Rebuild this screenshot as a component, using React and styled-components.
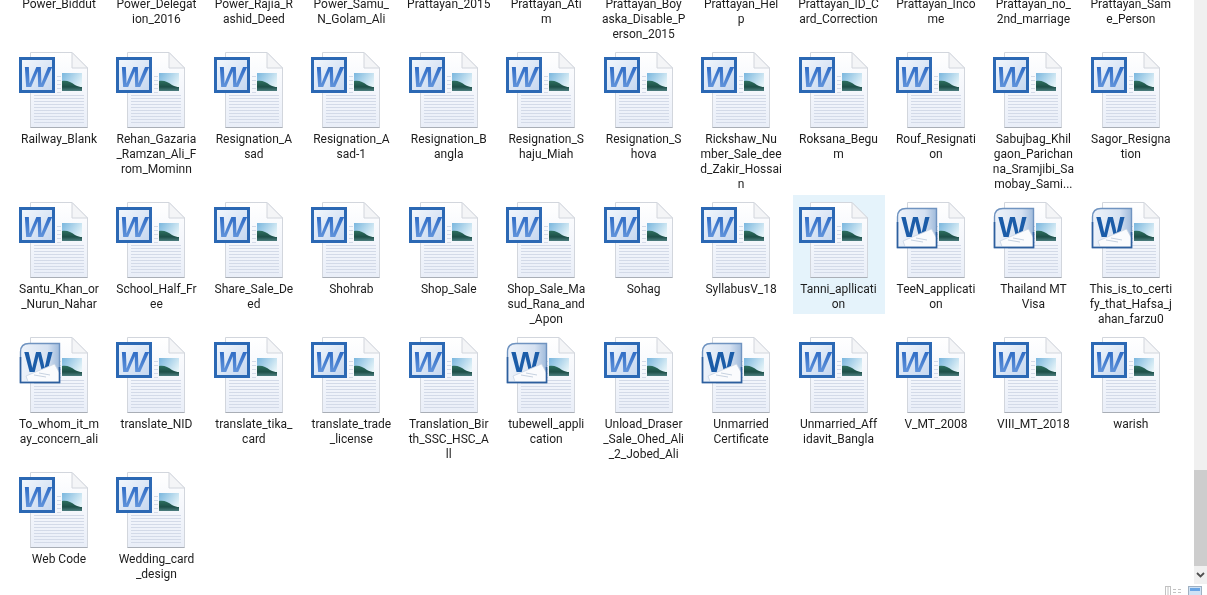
import React from "react";
import styled, { createGlobalStyle } from "styled-components";

const GlobalStyle = createGlobalStyle`
  html, body {
    margin: 0;
    height: 100%;
    overflow: hidden;
    background: #ffffff;
  }
`;

const Window = styled.div`
  height: 595px;
  display: flex;
  flex-direction: column;
  overflow: hidden;
  font-family: Roboto, "Noto Sans", sans-serif;
`;

const Main = styled.div`
  flex: 1;
  min-height: 0;
  display: flex;
`;

const FileArea = styled.div`
  flex: 1;
  min-width: 0;
  overflow: hidden;
`;

const FileGrid = styled.div`
  display: grid;
  grid-template-columns: repeat(12, 92px);
  column-gap: 5.45px;
  row-gap: 1px;
  align-items: start;
  margin-top: -90px;
  padding-left: 13px;
  filter: blur(0.4px);
`;

const FileItem = styled.div`
  padding: 7px 0 2px;
  background: ${(p) => (p.$selected ? "#e5f3fb" : "transparent")};
`;

const IconBox = styled.div`
  height: 76px;
  padding-left: 6px;
  margin-bottom: 4px;
`;

const FileName = styled.div`
  font-size: 12px;
  line-height: 15px;
  color: #1c1c1c;
  text-align: center;
  white-space: pre-line;
`;

const ScrollBar = styled.div`
  width: 13px;
  background: #f0f0f0;
  display: flex;
  flex-direction: column;
  justify-content: flex-end;
`;

const Thumb = styled.div`
  height: 96px;
  background: #cdcdcd;
`;

const ArrowDown = styled.div`
  height: 18px;
  display: flex;
  align-items: center;
  justify-content: center;
`;

const StatusBar = styled.div`
  height: 11px;
  flex-shrink: 0;
  display: flex;
  justify-content: flex-end;
  gap: 6px;
  padding: 2px 5px 0 0;
  box-sizing: border-box;
  overflow: hidden;
  filter: blur(0.4px);
`;

const files = [
  { name: "Power_Biddut" },
  { name: "Power_Delegat\nion_2016" },
  { name: "Power_Rajia_R\nashid_Deed" },
  { name: "Power_Samu_\nN_Golam_Ali" },
  { name: "Prattayan_2015" },
  { name: "Prattayan_Ati\nm" },
  { name: "Prattayan_Boy\naska_Disable_P\nerson_2015" },
  { name: "Prattayan_Hel\np" },
  { name: "Prattayan_ID_C\nard_Correction" },
  { name: "Prattayan_Inco\nme" },
  { name: "Prattayan_no_\n2nd_marriage" },
  { name: "Prattayan_Sam\ne_Person" },
  { name: "Railway_Blank" },
  { name: "Rehan_Gazaria\n_Ramzan_Ali_F\nrom_Mominn" },
  { name: "Resignation_A\nsad" },
  { name: "Resignation_A\nsad-1" },
  { name: "Resignation_B\nangla" },
  { name: "Resignation_S\nhaju_Miah" },
  { name: "Resignation_S\nhova" },
  { name: "Rickshaw_Nu\nmber_Sale_dee\nd_Zakir_Hossai\nn" },
  { name: "Roksana_Begu\nm" },
  { name: "Rouf_Resignati\non" },
  { name: "Sabujbag_Khil\ngaon_Parichan\nna_Sramjibi_Sa\nmobay_Sami..." },
  { name: "Sagor_Resigna\ntion" },
  { name: "Santu_Khan_or\n_Nurun_Nahar" },
  { name: "School_Half_Fr\nee" },
  { name: "Share_Sale_De\ned" },
  { name: "Shohrab" },
  { name: "Shop_Sale" },
  { name: "Shop_Sale_Ma\nsud_Rana_and\n_Apon" },
  { name: "Sohag" },
  { name: "SyllabusV_18" },
  { name: "Tanni_apllicati\non", selected: true },
  { name: "TeeN_applicati\non", modern: true },
  { name: "Thailand MT\nVisa", modern: true },
  { name: "This_is_to_certi\nfy_that_Hafsa_j\nahan_farzu0", modern: true },
  { name: "To_whom_it_m\nay_concern_ali", modern: true },
  { name: "translate_NID" },
  { name: "translate_tika_\ncard" },
  { name: "translate_trade\n_license" },
  { name: "Translation_Bir\nth_SSC_HSC_A\nll" },
  { name: "tubewell_appli\ncation", modern: true },
  { name: "Unload_Draser\n_Sale_Ohed_Ali\n_2_Jobed_Ali" },
  { name: "Unmarried\nCertificate", modern: true },
  { name: "Unmarried_Aff\nidavit_Bangla" },
  { name: "V_MT_2008" },
  { name: "VIII_MT_2018" },
  { name: "warish" },
  { name: "Web Code" },
  { name: "Wedding_card\n_design" },
];

// gradients shared by every icon on the page
const IconDefs = () => (
  <svg width="0" height="0" style={{ position: "absolute" }}>
    <defs>
      <linearGradient id="paper" x1="0" y1="0" x2="0" y2="1">
        <stop offset="0" stopColor="#ffffff" />
        <stop offset="1" stopColor="#e9eef8" />
      </linearGradient>
      <linearGradient id="sky" x1="0" y1="0" x2="1" y2="0.6">
        <stop offset="0" stopColor="#79b6de" />
        <stop offset="1" stopColor="#e6f4f8" />
      </linearGradient>
      <linearGradient id="land" x1="0" y1="0" x2="0" y2="1">
        <stop offset="0" stopColor="#2c6f5e" />
        <stop offset="0.6" stopColor="#1d4f48" />
        <stop offset="1" stopColor="#4d7f80" />
      </linearGradient>
      <linearGradient id="oldFace" x1="0" y1="0" x2="1" y2="1">
        <stop offset="0" stopColor="#f4f8fd" />
        <stop offset="1" stopColor="#c4d6ef" />
      </linearGradient>
      <linearGradient id="oldInk" x1="0" y1="0" x2="0" y2="1">
        <stop offset="0" stopColor="#1f5fbd" />
        <stop offset="1" stopColor="#6f9fe2" />
      </linearGradient>
      <linearGradient id="newFace" x1="0" y1="0" x2="1" y2="0">
        <stop offset="0" stopColor="#eef3fa" />
        <stop offset="0.7" stopColor="#d5e1f1" />
        <stop offset="1" stopColor="#9fbadb" />
      </linearGradient>
    </defs>
  </svg>
);

const PageBase = () => (
  <>
    <path d="M11.5 0.5H53L68.5 16V75.5H11.5Z" fill="url(#paper)" stroke="#d2d6dd" />
    <path d="M11.5 75.5H68.5" stroke="#a9aeb6" />
    <path d="M53 0.5V16H68.5Z" fill="#f4f5f7" stroke="#d2d6dd" />
    {[43, 46, 49, 52, 55, 58, 61, 64, 67, 70].map((y) => (
      <path key={y} d={`M15 ${y}.5H65`} stroke="#d3dae8" />
    ))}
    {[24, 28, 32, 36, 40].map((y) => (
      <path key={y} d={`M38 ${y}.5H42`} stroke="#d3dae8" />
    ))}
    <rect x="43" y="21" width="20" height="18" fill="url(#sky)" />
    <path d="M43 29C48 28 52 30 56 33C59 34.5 61 35 63 35V39H43Z" fill="url(#land)" />
  </>
);

const OldWordIcon = () => (
  <svg width="70" height="76" viewBox="0 0 70 76">
    <PageBase />
    <rect x="1.5" y="6.5" width="33" height="33" fill="url(#oldFace)" stroke="#2b68b4" strokeWidth="3" />
    <text
      x="17.5"
      y="34.5"
      textAnchor="middle"
      fontFamily="Liberation Sans, sans-serif"
      fontWeight="700"
      fontStyle="italic"
      fontSize="29"
      fill="url(#oldInk)"
    >
      W
    </text>
  </svg>
);

const ModernWordIcon = () => (
  <svg width="70" height="76" viewBox="0 0 70 76">
    <PageBase />
    <path d="M1.5 15C1.5 9 5 6.5 10 6.5H40.5V45.5H1.5Z" fill="url(#newFace)" stroke="#6f93c0" strokeWidth="1.4" />
    <text
      x="19.5"
      y="35"
      textAnchor="middle"
      fontFamily="Liberation Sans, sans-serif"
      fontWeight="700"
      fontSize="30"
      fill="#1b5ca8"
    >
      W
    </text>
    <path d="M7 39L35.5 27L40.5 36V44.5H9Z" fill="#fafbfd" stroke="#c9d4e3" strokeWidth="0.8" />
    <path d="M15 38L27 40M20 36L31 38" stroke="#b9c6d8" strokeWidth="0.8" />
    <path d="M1.5 20V45.5H40.5V30" fill="none" stroke="#2d5f9e" strokeWidth="1.6" />
  </svg>
);

const DetailsGlyph = () => (
  <svg width="17" height="10" viewBox="0 0 17 10">
    <rect x="0.5" y="0.5" width="5" height="9" fill="none" stroke="#c2c2c2" />
    <path d="M3 0.5V9.5M8 3.5H11M8 6.5H11M13 3.5H16M13 6.5H16" stroke="#c2c2c2" />
  </svg>
);

const LargeIconsGlyph = () => (
  <svg width="14" height="10" viewBox="0 0 14 10">
    <rect x="0.5" y="0.5" width="13" height="9" fill="#cfe2f5" stroke="#9fb0c2" />
    <rect x="2" y="2" width="10" height="3" fill="#6aa5e4" />
  </svg>
);

export default function App() {
  return (
    <>
      <GlobalStyle />
      <IconDefs />
      <Window>
        <Main>
          <FileArea>
            <FileGrid>
              {files.map((file) => (
                <FileItem key={file.name} $selected={file.selected}>
                  <IconBox>{file.modern ? <ModernWordIcon /> : <OldWordIcon />}</IconBox>
                  <FileName>{file.name}</FileName>
                </FileItem>
              ))}
            </FileGrid>
          </FileArea>
          <ScrollBar>
            <Thumb />
            <ArrowDown>
              <svg width="9" height="6" viewBox="0 0 9 6">
                <path d="M1 1L4.5 4.5L8 1" fill="none" stroke="#505050" strokeWidth="1.8" />
              </svg>
            </ArrowDown>
          </ScrollBar>
        </Main>
        <StatusBar>
          <DetailsGlyph />
          <LargeIconsGlyph />
        </StatusBar>
      </Window>
    </>
  );
}
